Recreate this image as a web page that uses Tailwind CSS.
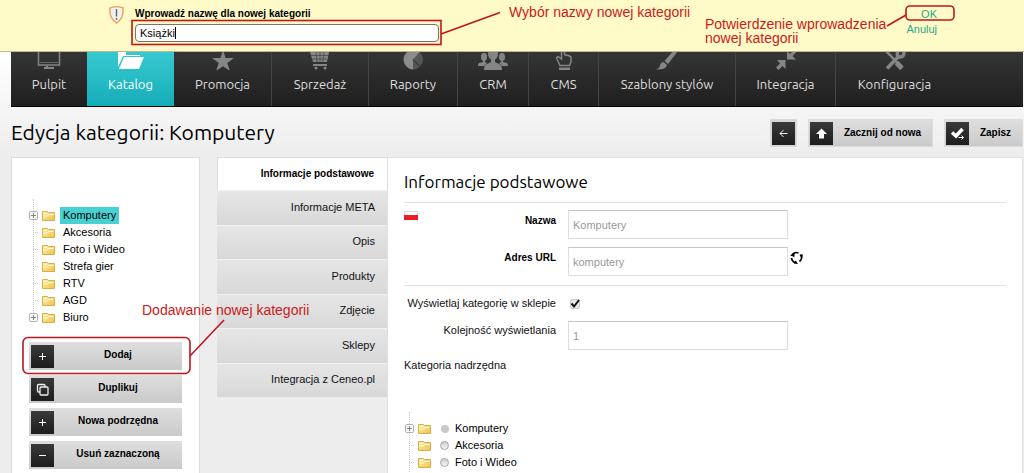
<!DOCTYPE html>
<html lang="pl">
<head>
<meta charset="utf-8">
<title>Edycja kategorii: Komputery</title>
<script src="https://cdn.jsdelivr.net/npm/@tailwindcss/browser@4"></script>
</head>
<body class="h-screen overflow-hidden bg-[#ededed] font-['Liberation_Sans',Arial,sans-serif] text-[11px] text-[#111]">

<svg class="absolute size-0" aria-hidden="true">
  <defs>
    <linearGradient id="gold" x1="0" y1="0" x2="1" y2="1"><stop offset="0" stop-color="#fff0a8"/><stop offset="1" stop-color="#eec34a"/></linearGradient>
    <symbol id="folder" viewBox="0 0 13 11"><path d="M.5 1.5h5l1 1h6v8H.5z" fill="url(#gold)" stroke="#dcae49"/><path d="M1.500 6h4l1-1.500h5" fill="none" stroke="#fffbe2"/><path d="M2 3.500h3" stroke="#fffbe2"/></symbol>
    <symbol id="expand" viewBox="0 0 9 9"><rect x=".5" y=".5" width="8" height="8" rx="1" fill="#f6f6f6" stroke="#b0b0b0"/><path d="M2 4.500h5M4.500 2v5" stroke="#888"/></symbol>
    <symbol id="plus" viewBox="0 0 23 23"><path d="M8 11.500h7M11.500 8v7" stroke="#fff"/></symbol>
  </defs>
</svg>

<div class="relative h-screen overflow-hidden">
  <!-- Prompt bar -->
  <form class="flex h-[52px] border-b border-[#b9b78f] bg-[#fffbc9]">
    <svg class="mt-1.5 ml-[109px] h-[18px] w-[15px] shrink-0" viewBox="0 0 15 18"><path d="M1 2Q7.500-.5 14 2Q15 12 7.500 17Q0 12 1 2z" fill="#fff" stroke="#e9a765" stroke-width="1.600"/><path d="M2.500 3Q7.500 1.500 12.500 3Q13 11 7.500 15Q2 11 2.500 3z" fill="#eef0f2"/><path d="M7.500 3v7.500M7.500 12v1.800" stroke="#666" stroke-width="1.400"/></svg>
    <div class="ml-[11px] flex w-[304px] shrink-0 flex-col pt-2">
      <label for="newname" class="text-[10px] leading-[12px] font-bold text-black">Wprowadź nazwę dla nowej kategorii</label>
      <div class="relative mt-1">
        <input id="newname" value="Książki" class="block h-[18px] w-full rounded-sm border border-[#77756a] bg-white px-1 text-[11px] text-black">
        <span class="absolute top-[3px] left-10 h-3 w-px bg-black"></span>
      </div>
    </div>
    <div class="mr-[87px] ml-auto flex flex-col items-end pt-[7px] text-[11px] leading-[15px]">
      <a href="#ok" class="text-[#1fa98b]">OK</a>
      <a href="#anuluj" class="text-[#1fa98b]">Anuluj</a>
    </div>
  </form>

  <div class="bg-linear-to-b from-white to-[#ededed]">
  <!-- Main navigation -->
  <nav class="mr-px ml-[11px] flex h-[55px] overflow-hidden border-b border-black bg-linear-to-b from-[#353535] to-[#1f1f1f] font-[Ubuntu,'Noto_Sans',sans-serif] text-[13px] leading-[18px] text-[#ddd]">
    <a href="#" class="flex w-[76px] shrink-0 flex-col items-center gap-[5px]"><svg class="h-[18px] w-7" viewBox="0 0 28 18" fill="none" stroke="#858585"><path d="M3.500-4V13H24.500V-4" stroke-width="1.500"/><path d="M5 10.500h18" stroke="#666"/><path d="M12 14v2M9 16h10" stroke-width="2"/></svg>Pulpit</a>
    <a href="#" class="flex w-[87px] shrink-0 flex-col items-center gap-[5px] bg-linear-to-b from-[#37c9d1] to-[#12adb8] text-white"><svg class="h-[18px] w-7" viewBox="0 0 28 18" fill="#fff"><path d="M1-2H9V3H23V4H6L1 15z"/><path d="M7 5H27L22 17H2z"/></svg>Katalog</a>
    <a href="#" class="flex w-[98px] shrink-0 flex-col items-center gap-[5px] border-r border-[#454545]"><svg class="h-[18px] w-7" viewBox="0 0 28 18" fill="#858585"><path d="M14-2L16.600 6H25L18.300 11L21 19L14 14.200L7 19L9.700 11L3 6H11.400z"/></svg>Promocja</a>
    <a href="#" class="flex w-[97px] shrink-0 flex-col items-center gap-[5px] border-r border-[#454545]"><svg class="h-[18px] w-7" viewBox="0 0 28 18" fill="#858585"><path d="M4 0H23L21 10H7z"/><path d="M5 3.500H22M6 7H21M10 0l1 10M14 0v10M18 0l-1 10" stroke="#444" stroke-width=".7"/><path d="M7 12H21V14H7z"/><circle cx="10" cy="16" r="1.500"/><circle cx="19" cy="16" r="1.500"/></svg>Sprzedaż</a>
    <a href="#" class="flex w-[89px] shrink-0 flex-col items-center gap-[5px] border-r border-[#454545]"><svg class="h-[18px] w-7" viewBox="0 0 28 18"><circle cx="14" cy="7.500" r="10" fill="#555"/><path d="M14 7.500V17.500A10 10 0 1 1 21-.4z" fill="#8c8c8c"/><path d="M14 7.500L21 14.500" stroke="#2c2c2c"/></svg>Raporty</a>
    <a href="#" class="flex w-[71px] shrink-0 flex-col items-center gap-[5px] border-r border-[#454545]"><svg class="h-[18px] w-8" viewBox="0 0 32 18" fill="#858585"><ellipse cx="16" cy="2" rx="5" ry="6"/><path d="M14 6h4v4l6 3q1 2 1 5H7q0-3 1-5l6-3z"/><ellipse cx="7" cy="5" rx="3" ry="4"/><ellipse cx="25" cy="5" rx="3" ry="4"/><path d="M6 8h2v2l2 1-3 3H1q0-2 1-3l4-1zM26 8h-2v2l-2 1 3 3h6q0-2-1-3l-4-1z"/></svg>CRM</a>
    <a href="#" class="flex w-[70px] shrink-0 flex-col items-center gap-[5px] border-r border-[#454545]"><svg class="h-[18px] w-7" viewBox="0 0 28 18" fill="none" stroke="#858585" stroke-width="1.500"><path d="M11.500-2V7L8 4.500L6.500 6L10 13.500H19.500L21 10V5L18.500 3.500L15.500 3L14.500 2.500V-2"/><path d="M9 17H20" stroke-width="3"/></svg>CMS</a>
    <a href="#" class="flex w-[137px] shrink-0 flex-col items-center gap-[5px] border-r border-[#454545]"><svg class="h-[18px] w-7" viewBox="0 0 28 18" fill="#858585"><path d="M22-3L25-1L15 12L11.500 9z"/><path d="M10.500 10L14 13Q13 18 3 17.500Q7 16 7 13Q8 10 10.500 10z"/></svg>Szablony stylów</a>
    <a href="#" class="flex w-[100px] shrink-0 flex-col items-center gap-[5px] border-r border-[#454545]"><svg class="h-[18px] w-7" viewBox="0 0 28 18" fill="#858585"><path d="M5 8H13.500V17L10.500 14L6.500 18L4 15.500L8 11.500z"/><path d="M24 7.500H15V-1L18 2L22-2L24.500 0L20.500 4z"/></svg>Integracja</a>
    <a href="#" class="flex w-[117px] shrink-0 flex-col items-center gap-[5px]"><svg class="h-[18px] w-7" viewBox="0 0 28 18" fill="none" stroke="#858585" stroke-width="3.500"><path d="M5-1L9 3L20 15" stroke-width="2.500"/><path d="M15.500 10.500L21 16.500" stroke-width="5"/><path d="M6 16.500L18 4"/><path d="M17-2Q15 5 19 5Q23 5 23 0"/></svg>Konfiguracja</a>
  </nav>

  <!-- Title and page actions -->
  <header class="flex h-[50px] items-center gap-[11px] pr-px pl-[11px]">
    <h1 class="mr-auto font-[Ubuntu,'Noto_Sans',sans-serif] text-[21px] leading-[26px] text-black">Edycja kategorii: Komputery</h1>
    <button aria-label="Wstecz" class="mt-0.5 flex h-7 w-[27px] items-center justify-center border border-[#d8d8d8] bg-[#d5d5d5]"><svg class="size-[23px] bg-linear-to-b from-[#3a3a3a] to-[#1d1d1d]" viewBox="0 0 23 23" fill="none" stroke="#eee"><path d="M15.500 11.500H8M11.500 8L8 11.500L11.500 15"/></svg></button>
    <button class="mt-0.5 flex h-7 w-[125px] items-center border border-[#ddd] bg-linear-to-b from-[#dedede] to-[#cacaca] pl-px text-[10px] font-bold text-black"><svg class="size-[23px] shrink-0 bg-linear-to-b from-[#3a3a3a] to-[#1d1d1d]" viewBox="0 0 23 23" fill="#fff"><path d="M11.500 6.500L17 12H14V16.500H9V12H6z"/></svg><span class="flex-1 pb-0.5">Zacznij od nowa</span></button>
    <button class="mt-0.5 flex h-7 w-[79px] items-center border border-[#ddd] bg-linear-to-b from-[#dedede] to-[#cacaca] pl-px text-[10px] font-bold text-black"><svg class="size-[23px] shrink-0 bg-linear-to-b from-[#3a3a3a] to-[#1d1d1d]" viewBox="0 0 23 23" fill="none" stroke="#fff"><path d="M6 10.500L10 14L16.500 7" stroke-width="3.500"/><path d="M12.500 15.500H17.500M15.500 13.500L17.500 15.500L15.500 17.500"/></svg><span class="flex-1 pb-0.5">Zapisz</span></button>
  </header>
  </div>

  <main class="flex items-stretch pr-px pl-[11px]">
    <!-- Category tree -->
    <aside class="mr-[17px] h-screen w-[189px] shrink-0 border border-[#dcdcdc] bg-white px-[17px] pt-[49px]">
      <ul class="relative text-[11px] leading-[17px] text-black before:absolute before:-top-2 before:left-1 before:h-[120px] before:border-l before:border-dotted before:border-[#ccc]">
        <li class="flex items-center"><svg class="relative mr-1 size-[9px]"><use href="#expand"/></svg><svg class="mr-[5px] h-[11px] w-[13px]"><use href="#folder"/></svg><a href="#" class="bg-[#48d1d3] px-[3px]">Komputery</a></li>
        <li class="flex items-center"><i class="mr-1 ml-1 w-[5px] border-t border-dotted border-[#ccc]"></i><svg class="mr-[5px] h-[11px] w-[13px]"><use href="#folder"/></svg><a href="#" class="px-[3px]">Akcesoria</a></li>
        <li class="flex items-center"><i class="mr-1 ml-1 w-[5px] border-t border-dotted border-[#ccc]"></i><svg class="mr-[5px] h-[11px] w-[13px]"><use href="#folder"/></svg><a href="#" class="px-[3px]">Foto i Wideo</a></li>
        <li class="flex items-center"><i class="mr-1 ml-1 w-[5px] border-t border-dotted border-[#ccc]"></i><svg class="mr-[5px] h-[11px] w-[13px]"><use href="#folder"/></svg><a href="#" class="px-[3px]">Strefa gier</a></li>
        <li class="flex items-center"><i class="mr-1 ml-1 w-[5px] border-t border-dotted border-[#ccc]"></i><svg class="mr-[5px] h-[11px] w-[13px]"><use href="#folder"/></svg><a href="#" class="px-[3px]">RTV</a></li>
        <li class="flex items-center"><i class="mr-1 ml-1 w-[5px] border-t border-dotted border-[#ccc]"></i><svg class="mr-[5px] h-[11px] w-[13px]"><use href="#folder"/></svg><a href="#" class="px-[3px]">AGD</a></li>
        <li class="flex items-center"><svg class="relative mr-1 size-[9px]"><use href="#expand"/></svg><svg class="mr-[5px] h-[11px] w-[13px]"><use href="#folder"/></svg><a href="#" class="px-[3px]">Biuro</a></li>
      </ul>
      <div class="mt-4 flex flex-col gap-[5px] text-[10px] font-bold text-black">
        <button class="flex h-7 items-center bg-linear-to-b from-[#dedede] to-[#cacaca] pl-0.5"><svg class="size-[23px] bg-linear-to-b from-[#3a3a3a] to-[#1d1d1d]"><use href="#plus"/></svg><span class="flex-1 pb-1">Dodaj</span></button>
        <button class="flex h-7 items-center bg-linear-to-b from-[#dedede] to-[#cacaca] pl-0.5"><svg class="size-[23px] bg-linear-to-b from-[#3a3a3a] to-[#1d1d1d]" viewBox="0 0 23 23" fill="none" stroke="#eee" stroke-width="1.300"><rect x="9" y="9" width="8" height="8" rx="1"/><path d="M9 14H7.500Q6.500 14 6.500 13V7.500Q6.500 6.500 7.500 6.500H13Q14 6.500 14 7.500V9"/></svg><span class="flex-1 pb-1">Duplikuj</span></button>
        <button class="flex h-7 items-center bg-linear-to-b from-[#dedede] to-[#cacaca] pl-0.5"><svg class="size-[23px] bg-linear-to-b from-[#3a3a3a] to-[#1d1d1d]"><use href="#plus"/></svg><span class="flex-1 pb-1">Nowa podrzędna</span></button>
        <button class="flex h-7 items-center bg-linear-to-b from-[#dedede] to-[#cacaca] pl-0.5"><svg class="size-[23px] bg-linear-to-b from-[#3a3a3a] to-[#1d1d1d]" viewBox="0 0 23 23"><path d="M8 11.500h7" stroke="#fff"/></svg><span class="flex-1 pb-1">Usuń zaznaczoną</span></button>
      </div>
    </aside>

    <!-- Section tabs -->
    <nav class="w-[170px] shrink-0 text-right text-[11px]">
      <a href="#" class="flex h-[33px] items-center justify-end border-t border-l border-[#dcdcdc] bg-white pr-[13px] pb-0.5 text-[10px] font-bold text-black">Informacje podstawowe</a>
      <div class="grid h-[207px] grid-rows-6">
        <a href="#" class="flex items-center justify-end border-t border-[#f2f2f2] bg-linear-to-b from-[#e6e6e6] to-[#d8d8d8] pr-3 pb-0.5">Informacje META</a>
        <a href="#" class="flex items-center justify-end border-t border-[#f2f2f2] bg-linear-to-b from-[#e6e6e6] to-[#d8d8d8] pr-3 pb-0.5">Opis</a>
        <a href="#" class="flex items-center justify-end border-t border-[#f2f2f2] bg-linear-to-b from-[#e6e6e6] to-[#d8d8d8] pr-3 pb-0.5">Produkty</a>
        <a href="#" class="flex items-center justify-end border-t border-[#f2f2f2] bg-linear-to-b from-[#e6e6e6] to-[#d8d8d8] pr-3 pb-0.5">Zdjęcie</a>
        <a href="#" class="flex items-center justify-end border-t border-[#f2f2f2] bg-linear-to-b from-[#e6e6e6] to-[#d8d8d8] pr-3 pb-0.5">Sklepy</a>
        <a href="#" class="flex items-center justify-end border-t border-[#f2f2f2] bg-linear-to-b from-[#e6e6e6] to-[#d8d8d8] pr-3 pb-0.5">Integracja z Ceneo.pl</a>
      </div>
    </nav>

    <!-- Category form -->
    <section class="min-w-0 flex-1 border border-[#e0e0e0] bg-white px-4">
      <h2 class="h-[45px] border-b border-[#e2e2e2] pt-3 font-[Ubuntu,'Noto_Sans',sans-serif] text-[17px] leading-6 text-black">Informacje podstawowe</h2>
      <div class="flex flex-col gap-2 border-b border-[#e2e2e2] pt-[7px] pb-[9px]">
        <div class="flex items-start">
          <svg class="mt-px h-[9px] w-[14px]" viewBox="0 0 14 9"><rect x=".5" y=".5" width="13" height="8" fill="#fff" stroke="#ddd"/><path d="M0 4h14v5H0z" fill="#ec1c24"/></svg>
          <label for="nazwa" class="mr-3 w-[138px] pt-[5px] text-right text-[10px] leading-3 font-bold text-black">Nazwa</label>
          <input id="nazwa" value="Komputery" class="h-[29px] w-[220px] border border-[#ddd] border-t-[#c4c4c4] bg-white px-1 text-[11px] text-[#999]">
        </div>
        <div class="flex items-start">
          <label for="url" class="mr-3 w-[152px] pt-[5px] text-right text-[10px] leading-3 font-bold text-black">Adres URL</label>
          <input id="url" value="komputery" class="h-[29px] w-[220px] border border-[#ddd] border-t-[#c4c4c4] bg-white px-1 text-[11px] text-[#999]">
          <button type="button" aria-label="Odśwież" class="mt-1 ml-0.5"><svg class="size-[13px]" viewBox="0 0 13 13" fill="none" stroke="#000" stroke-width="1.800"><path d="M2 4.500A5 5 0 0 1 8.500 2M10.500 3.500A5 5 0 0 1 9.500 10.500M6.500 11.500A5 5 0 0 1 1.500 7"/><path d="M0 4.500L4.500 2V6zM9.500 4L13 3.500L12 7.500zM5.500 9.500L8 13L4 12.500z" fill="#000" stroke="none"/></svg></button>
        </div>
      </div>
      <div class="flex items-center pt-[11px] leading-[13px]">
        <label for="show" class="mr-[14px] w-[152px] text-right">Wyświetlaj kategorię w sklepie</label>
        <span class="relative flex"><input id="show" type="checkbox" checked class="size-2.5 appearance-none rounded-xs border border-[#ccc] bg-[#e6e6e6]"><svg class="pointer-events-none absolute inset-0 size-2.5" viewBox="0 0 10 10" fill="none" stroke="#111" stroke-width="2"><path d="M1.500 4.500L4 7.500L9 1"/></svg></span>
      </div>
      <div class="mt-[11px] flex items-start">
        <label for="order" class="mr-3 w-[152px] pt-0.5 text-right leading-[14px]">Kolejność wyświetlania</label>
        <input id="order" value="1" class="h-[29px] w-[220px] border border-[#ddd] border-t-[#c4c4c4] bg-white px-1 text-[11px] text-[#999]">
      </div>
      <p class="mt-2 leading-[14px]">Kategoria nadrzędna</p>
      <ul class="relative mt-12 leading-[17px] text-black before:absolute before:-top-2 before:left-[5px] before:h-16 before:border-l before:border-dotted before:border-[#ccc]">
        <li class="flex items-center"><svg class="relative mr-1 ml-px size-[9px]"><use href="#expand"/></svg><svg class="mr-[9px] h-[11px] w-[13px]"><use href="#folder"/></svg><input id="k1" type="radio" name="parent" disabled class="mr-1 ml-px size-2 appearance-none rounded-full border-0 bg-[#c9c9c9]"><label for="k1" class="pl-0.5">Komputery</label></li>
        <li class="flex items-center"><i class="mr-1 ml-[5px] w-[5px] border-t border-dotted border-[#ccc]"></i><svg class="mr-[9px] h-[11px] w-[13px]"><use href="#folder"/></svg><input id="k2" type="radio" name="parent" class="mr-1 size-[9px] appearance-none rounded-full border border-[#a5a5a5] bg-linear-to-b from-[#d0d0d0] to-[#f4f4f4]"><label for="k2" class="pl-0.5">Akcesoria</label></li>
        <li class="flex items-center"><i class="mr-1 ml-[5px] w-[5px] border-t border-dotted border-[#ccc]"></i><svg class="mr-[9px] h-[11px] w-[13px]"><use href="#folder"/></svg><input id="k3" type="radio" name="parent" class="mr-1 size-[9px] appearance-none rounded-full border border-[#a5a5a5] bg-linear-to-b from-[#d0d0d0] to-[#f4f4f4]"><label for="k3" class="pl-0.5">Foto i Wideo</label></li>
      </ul>
    </section>
  </main>

  <!-- Callouts over the page -->
  <svg class="pointer-events-none absolute top-0 left-0" width="1024" height="473" fill="none" stroke="#c0161b" stroke-width="1.600">
    <rect x="132" y="20.500" width="309" height="24"/>
    <path d="M441 34L500 12.500"/>
    <rect x="906" y="6" width="48" height="14" rx="4"/>
    <path d="M887 26L906 15"/>
    <rect x="23" y="337.500" width="167" height="36" rx="5"/>
    <path d="M190 356L224 320"/>
  </svg>
  <p class="pointer-events-none absolute top-1 left-[509px] text-[14px] leading-4 whitespace-nowrap text-[#cc1a1a]">Wybór nazwy nowej kategorii</p>
  <p class="pointer-events-none absolute top-[17px] left-[705px] text-[14px] leading-[14px] whitespace-nowrap text-[#cc1a1a]">Potwierdzenie wprowadzenia<br>nowej kategorii</p>
  <p class="pointer-events-none absolute top-[302px] left-[142px] text-[14px] leading-4 whitespace-nowrap text-[#cc1a1a]">Dodawanie nowej kategorii</p>
</div>
</body>
</html>
